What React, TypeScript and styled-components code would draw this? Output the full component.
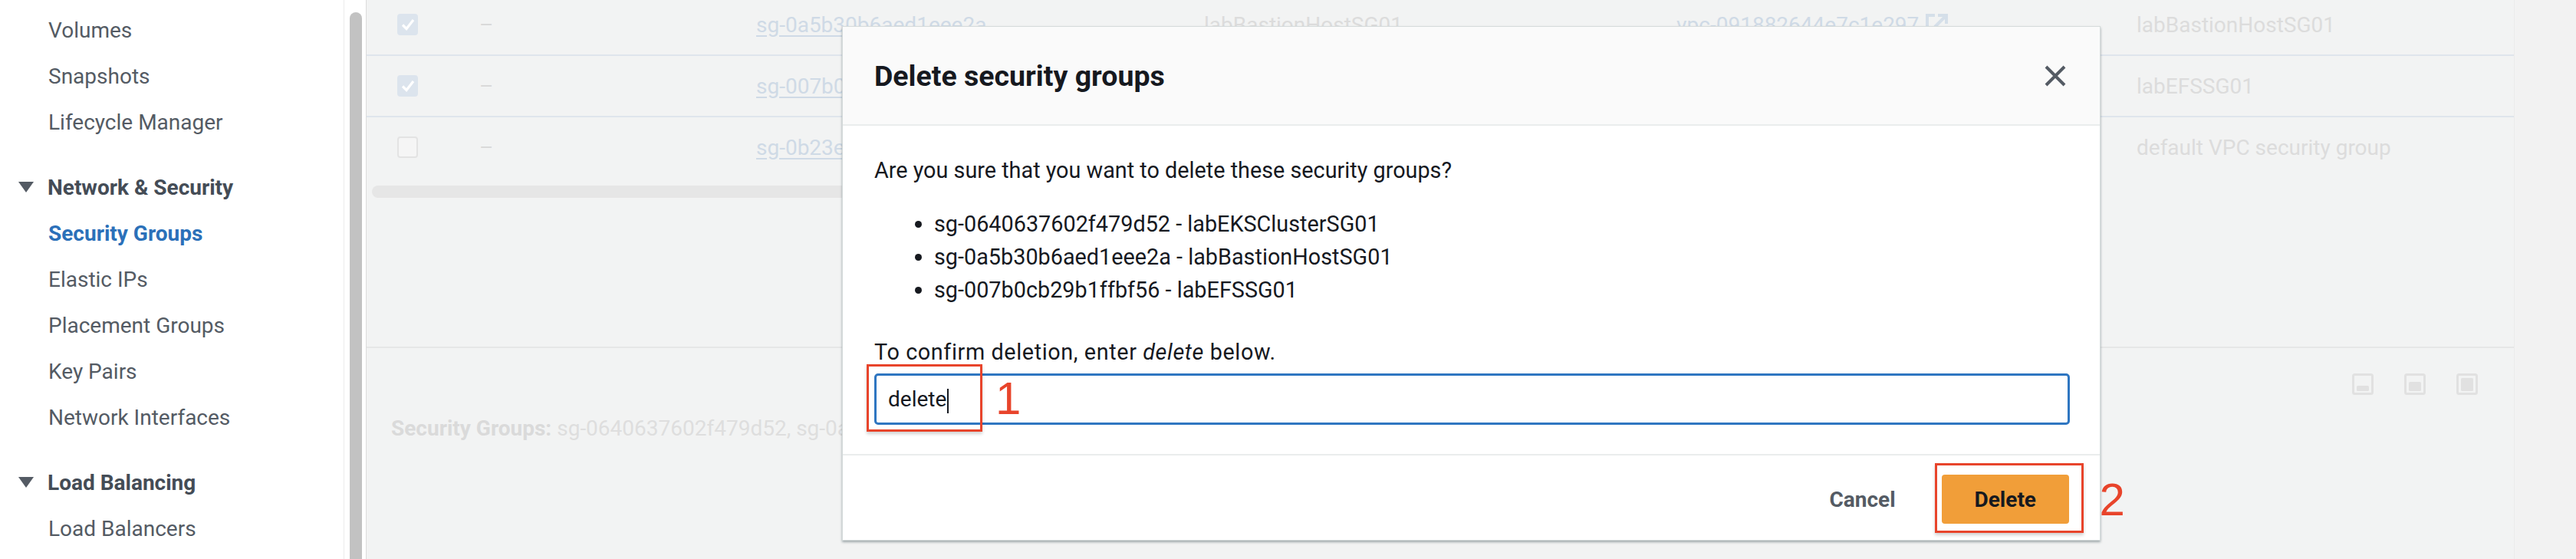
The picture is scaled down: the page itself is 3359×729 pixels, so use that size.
import styled, { createGlobalStyle } from 'styled-components';

const GlobalStyle = createGlobalStyle`
  html, body {
    margin: 0;
    padding: 0;
    width: 3359px;
    height: 729px;
    overflow: hidden;
    background: #ffffff;
    font-family: Roboto, "Liberation Sans", Arial, sans-serif;
  }
  * { box-sizing: border-box; }
`;

const Page = styled.div`
  display: flex;
  width: 3359px;
  height: 729px;
  overflow: hidden;
`;

/* ---------- side navigation ---------- */

const Sidebar = styled.nav`
  width: 448px;
  flex-shrink: 0;
  background: #ffffff;
  padding-top: 10px;
  font-size: 28px;
`;

const NavItem = styled.div<{ $active?: boolean }>`
  height: 60px;
  line-height: 60px;
  padding-left: 63px;
  color: ${({ $active }) => ($active ? '#2b70b9' : '#545b64')};
  font-weight: ${({ $active }) => ($active ? 700 : 400)};
  white-space: nowrap;
`;

const NavSection = styled.div`
  display: flex;
  align-items: center;
  gap: 18px;
  height: 62px;
  margin-top: 23px;
  padding-left: 24px;
  color: #444c56;
  font-weight: 700;
`;

const Caret = styled.span`
  width: 0;
  height: 0;
  border-left: 10px solid transparent;
  border-right: 10px solid transparent;
  border-top: 14px solid #545b64;
`;

const ScrollTrack = styled.div`
  width: 30px;
  flex-shrink: 0;
  background: #ffffff;
  border-left: 1px solid #ececec;
  border-right: 1px solid #dcdcdc;
  padding: 16px 0 0 7px;
`;

const ScrollThumb = styled.div`
  width: 16px;
  height: 800px;
  border-radius: 8px;
  background: #c2c2c2;
`;

/* ---------- dimmed main area ---------- */

const Main = styled.main`
  position: relative;
  flex: 1;
  display: flex;
  background: #f2f3f3;
  overflow: hidden;
`;

const Content = styled.div`
  flex: 1;
  display: flex;
  flex-direction: column;
`;

const RightStrip = styled.div`
  width: 81px;
  flex-shrink: 0;
  border-left: 1px solid #ebebeb;
  background: #f2f2f2;
`;

const TableArea = styled.div`
  height: 454px;
  border-bottom: 2px solid #e6e7e7;
`;

const Rows = styled.div`
  margin-top: -7px;
`;

const Row = styled.div<{ $last?: boolean }>`
  display: grid;
  grid-template-columns: 107px 361px 584px 616px 600px 1fr;
  align-items: center;
  height: 80px;
  padding-left: 40px;
  border-bottom: 2px solid ${({ $last }) => ($last ? 'transparent' : '#dfe5ec')};
  font-size: 28px;
  color: #dcdcdc;
  white-space: nowrap;
`;

const Check = styled.span<{ $checked?: boolean }>`
  display: flex;
  align-items: center;
  justify-content: center;
  width: 27px;
  height: 28px;
  border-radius: 4px;
  background: ${({ $checked }) => ($checked ? '#dce4ed' : '#f5f5f5')};
  border: ${({ $checked }) => ($checked ? 'none' : '2px solid #e3e3e3')};
`;

const Dash = styled.span`
  color: #d9d9d9;
`;

const FadedLink = styled.span`
  color: #cfdae6;
  text-decoration: underline;
  text-underline-offset: 4px;
`;

const VpcCell = styled.span`
  display: flex;
  align-items: center;
  gap: 9px;
  color: #d5dfe9;
`;

const HScroll = styled.div`
  width: 2000px;
  height: 16px;
  margin: 9px 0 0 7px;
  border-radius: 8px;
  background: #e6e6e6;
`;

const DetailPane = styled.div`
  flex: 1;
  padding: 33px 47px 0 32px;
`;

const PaneTools = styled.div`
  display: flex;
  justify-content: flex-end;
  gap: 40px;
`;

const DetailText = styled.div`
  margin-top: 24px;
  font-size: 28px;
  line-height: 40px;
  color: #dedede;
  white-space: nowrap;
  b { color: #dadada; }
`;

/* ---------- modal ---------- */

const Backdrop = styled.div`
  position: absolute;
  inset: 0;
  display: flex;
  justify-content: center;
  align-items: flex-start;
  padding-top: 34px;
  z-index: 10;
`;

const Modal = styled.div`
  width: 1641px;
  background: #ffffff;
  border: 1px solid #d5dbdb;
  box-shadow: 0 2px 3px rgba(0, 28, 36, 0.35);
  color: #16191f;
`;

const ModalHeader = styled.div`
  display: flex;
  align-items: center;
  justify-content: space-between;
  height: 129px;
  padding: 0 44px 0 41px;
  background: #fafafa;
  border-bottom: 2px solid #eaeded;
`;

const Title = styled.h2`
  margin: 0;
  font-size: 37.5px;
  font-weight: 700;
`;

const CloseButton = styled.button`
  display: flex;
  padding: 0;
  border: none;
  background: none;
`;

const ModalBody = styled.div`
  padding: 37px 39px 38px 41px;
  font-size: 28.8px;
`;

const Para = styled.p`
  margin: 0;
  line-height: 42px;
`;

const List = styled.ul`
  margin: 28px 0 0;
  padding-left: 78px;
  li { line-height: 43px; }
`;

const Label = styled(Para)`
  margin-top: 38px;
  letter-spacing: 0.6px;
`;

const InputWrap = styled.div`
  position: relative;
  margin-top: 7px;
`;

const TextBox = styled.div`
  height: 67px;
  padding-left: 15px;
  border: 3px solid #2f76c1;
  border-radius: 5px;
  font-size: 28px;
  line-height: 61px;
  color: #16191f;
`;

const TextCaret = styled.span`
  display: inline-block;
  width: 2px;
  height: 32px;
  margin-left: 1px;
  background: #16191f;
  vertical-align: middle;
`;

const ModalFooter = styled.div`
  display: flex;
  justify-content: flex-end;
  align-items: center;
  gap: 20px;
  padding: 25px 40px 21px;
  border-top: 2px solid #eaeded;
`;

const CancelButton = styled.button`
  height: 64px;
  padding: 0 40px;
  border: none;
  background: none;
  font-family: inherit;
  font-size: 28px;
  font-weight: 700;
  color: #545b64;
`;

const DeleteWrap = styled.div`
  position: relative;
`;

const DeleteButton = styled.button`
  height: 64px;
  padding: 0 43px;
  border: none;
  border-radius: 4px;
  background: #f19e39;
  font-family: inherit;
  font-size: 28px;
  font-weight: 700;
  color: #16191f;
`;

/* ---------- screenshot annotations ---------- */

const Mark = styled.div<{ $l: number; $t: number; $w: number; $h: number }>`
  position: absolute;
  left: ${({ $l }) => $l}px;
  top: ${({ $t }) => $t}px;
  width: ${({ $w }) => $w}px;
  height: ${({ $h }) => $h}px;
  border: 3px solid #e8442b;
  box-shadow: 0 3px 4px rgba(0, 0, 0, 0.18);
  pointer-events: none;
`;

const Step = styled.span<{ $l: number; $t: number }>`
  position: absolute;
  left: ${({ $l }) => $l}px;
  top: ${({ $t }) => $t}px;
  font-family: "Liberation Sans", Arial, sans-serif;
  font-size: 60px;
  line-height: 60px;
  color: #e8442b;
`;

const CheckMark = () => (
  <svg width="18" height="16" viewBox="0 0 18 16">
    <path d="M2 8.5 L7 13.5 L16 2" fill="none" stroke="#ffffff" strokeWidth="3.2" />
  </svg>
);

const ExternalIcon = () => (
  <svg width="29" height="29" viewBox="0 0 29 29">
    <path d="M12 2 H2 V27 H27 V17" fill="none" stroke="#d5dfe9" strokeWidth="4" />
    <path d="M16 2 H27 V13" fill="none" stroke="#d5dfe9" strokeWidth="4" />
    <path d="M27 2 L12 17" fill="none" stroke="#d5dfe9" strokeWidth="4" />
  </svg>
);

const PaneIcon = ({ fill }: { fill: 'bottom' | 'middle' | 'full' }) => (
  <svg width="28" height="28" viewBox="0 0 28 28">
    <rect x="1.5" y="1.5" width="25" height="25" rx="2" fill="none" stroke="#e1e1e1" strokeWidth="3" />
    {fill === 'bottom' && <rect x="6" y="16" width="16" height="7" rx="1.5" fill="#e1e1e1" />}
    {fill === 'middle' && <rect x="6" y="11" width="16" height="12" rx="1.5" fill="#e1e1e1" />}
    {fill === 'full' && <rect x="6" y="6" width="16" height="17" rx="1.5" fill="#e1e1e1" />}
  </svg>
);

const CloseIcon = () => (
  <svg width="28" height="28" viewBox="0 0 28 28">
    <path d="M2 2 L26 26 M26 2 L2 26" stroke="#545b64" strokeWidth="4" />
  </svg>
);

const groups = [
  { id: 'sg-0a5b30b6aed1eee2a', name: 'labBastionHostSG01', vpc: 'vpc-091882644e7c1e297', desc: 'labBastionHostSG01', checked: true },
  { id: 'sg-007b0cb29b1ffbf56', name: 'labEFSSG01', vpc: 'vpc-091882644e7c1e297', desc: 'labEFSSG01', checked: true },
  { id: 'sg-0b23e6f1c1d8a0b71', name: 'default', vpc: 'vpc-091882644e7c1e297', desc: 'default VPC security group', checked: false },
];

const toDelete = [
  'sg-0640637602f479d52 - labEKSClusterSG01',
  'sg-0a5b30b6aed1eee2a - labBastionHostSG01',
  'sg-007b0cb29b1ffbf56 - labEFSSG01',
];

export default function App() {
  return (
    <Page>
      <GlobalStyle />
      <Sidebar>
        <NavItem>Volumes</NavItem>
        <NavItem>Snapshots</NavItem>
        <NavItem>Lifecycle Manager</NavItem>
        <NavSection><Caret />Network &amp; Security</NavSection>
        <NavItem $active>Security Groups</NavItem>
        <NavItem>Elastic IPs</NavItem>
        <NavItem>Placement Groups</NavItem>
        <NavItem>Key Pairs</NavItem>
        <NavItem>Network Interfaces</NavItem>
        <NavSection><Caret />Load Balancing</NavSection>
        <NavItem>Load Balancers</NavItem>
      </Sidebar>
      <ScrollTrack>
        <ScrollThumb />
      </ScrollTrack>

      <Main>
        <Content>
          <TableArea>
            <Rows>
              {groups.map((g, i) => (
                <Row key={g.id} $last={i === groups.length - 1}>
                  <Check $checked={g.checked}>{g.checked && <CheckMark />}</Check>
                  <Dash>–</Dash>
                  <FadedLink>{g.id}</FadedLink>
                  <span>{g.name}</span>
                  <VpcCell>
                    <FadedLink>{g.vpc}</FadedLink>
                    <ExternalIcon />
                  </VpcCell>
                  <span>{g.desc}</span>
                </Row>
              ))}
            </Rows>
            <HScroll />
          </TableArea>
          <DetailPane>
            <PaneTools>
              <PaneIcon fill="bottom" />
              <PaneIcon fill="middle" />
              <PaneIcon fill="full" />
            </PaneTools>
            <DetailText>
              <b>Security Groups:</b> sg-0640637602f479d52, sg-0a5b30b6aed1eee2a, sg-007b0cb29b1ffbf56
            </DetailText>
          </DetailPane>
        </Content>
        <RightStrip />

        <Backdrop>
          <Modal>
            <ModalHeader>
              <Title>Delete security groups</Title>
              <CloseButton aria-label="Close">
                <CloseIcon />
              </CloseButton>
            </ModalHeader>
            <ModalBody>
              <Para>Are you sure that you want to delete these security groups?</Para>
              <List>
                {toDelete.map((line) => (
                  <li key={line}>{line}</li>
                ))}
              </List>
              <Label>
                To confirm deletion, enter <i>delete</i> below.
              </Label>
              <InputWrap>
                <TextBox>
                  delete
                  <TextCaret />
                </TextBox>
                <Mark $l={-10} $t={-12} $w={151} $h={88} />
                <Step $l={158} $t={3}>1</Step>
              </InputWrap>
            </ModalBody>
            <ModalFooter>
              <CancelButton>Cancel</CancelButton>
              <DeleteWrap>
                <DeleteButton>Delete</DeleteButton>
                <Mark $l={-9} $t={-15} $w={194} $h={91} />
                <Step $l={206} $t={3}>2</Step>
              </DeleteWrap>
            </ModalFooter>
          </Modal>
        </Backdrop>
      </Main>
    </Page>
  );
}
